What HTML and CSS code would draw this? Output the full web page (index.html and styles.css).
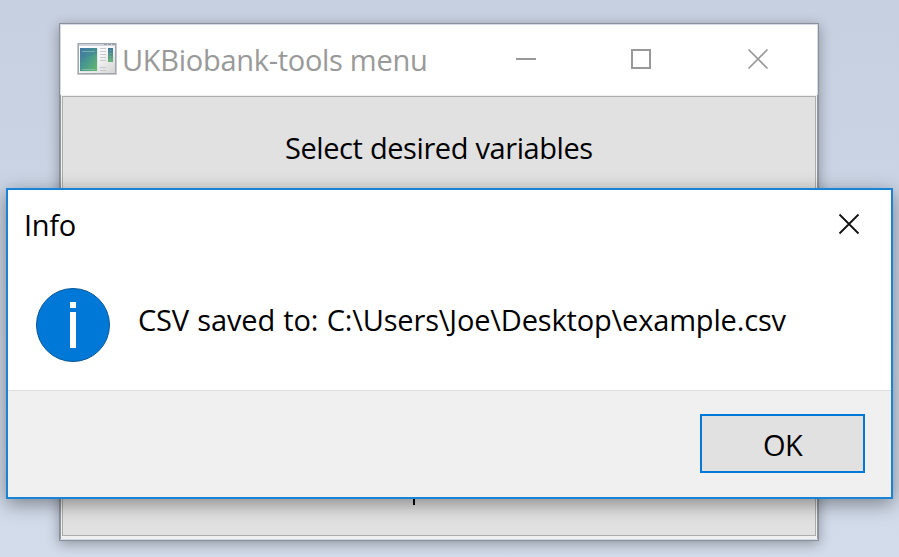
FILE: index.html
```html
<!DOCTYPE html>
<html lang="en">
<head>
<meta charset="utf-8">
<title>UKBiobank-tools menu</title>
<link rel="stylesheet" href="styles.css">
</head>
<body>
<main class="desktop">
  <section class="window">
    <header class="window-title">
      <svg class="app-icon" width="40" height="34" viewBox="0 0 40 34">
        <defs>
          <linearGradient id="pane" x1="0" y1="0" x2="1" y2="1">
            <stop offset="0" stop-color="#4478a8"/><stop offset=".45" stop-color="#469690"/><stop offset="1" stop-color="#66b86c"/>
          </linearGradient>
          <linearGradient id="sheet" x1="0" y1="0" x2="1" y2="1">
            <stop offset="0" stop-color="#fff"/><stop offset=".5" stop-color="#f7f7f7"/><stop offset="1" stop-color="#d4d4d6"/>
          </linearGradient>
          <linearGradient id="strip" x1="0" y1="0" x2="0" y2="1">
            <stop offset="0" stop-color="#41769a"/><stop offset="1" stop-color="#68b476"/>
          </linearGradient>
        </defs>
        <rect x="0" y="1" width="40" height="32" fill="#cacaca"/>
        <rect x="1" y="1" width="38" height="31" fill="#a1a5ad"/>
        <rect x="2" y="2" width="36" height="29" fill="url(#sheet)"/>
        <rect x="2" y="2" width="36" height="2" fill="#cfd3dc"/>
        <path d="M27 2.5h11" stroke="#9a9fa8" stroke-dasharray="3 1"/>
        <rect x="3" y="6" width="18" height="24" fill="#e3e7e7"/>
        <rect x="3" y="6" width="17" height="23" fill="url(#pane)"/>
        <path d="M3 21q5-7 17-9v-6H3z" fill="#3f78a0" opacity=".3"/>
        <path d="M5 9.500h13M5 27.500h13" stroke="#9cc8bd" opacity=".6"/>
        <path d="M23 6.500h6M23 9.500h6M23 12.500h6M23 15.500h6M23 18.500h6M23 25.500h6M23 28.500h6" stroke="#c9cacb"/>
        <rect x="31" y="6" width="5" height="14" fill="url(#strip)"/>
        <path d="M33.500 8v12" stroke="#8fc0a8" stroke-dasharray="1 2" opacity=".7"/>
      </svg>
      <h1 class="window-name">UKBiobank-tools menu</h1>
      <svg class="window-controls" width="254" height="22" viewBox="0 0 254 22" fill="none" stroke="#999" stroke-width="2">
        <path d="M0 11h20M116 2h18v18h-18z"/>
        <path d="M232.500 1.500l19 19M251.500 1.500l-19 19" stroke-width="1.700"/>
      </svg>
    </header>
    <div class="window-body">
      <div class="menu-panel">
        <span class="menu-label">Select desired variables</span>
        <span class="descender"></span>
      </div>
    </div>
  </section>

  <section class="dialog" role="dialog">
    <header class="dialog-title">
      <h2 class="dialog-name">Info</h2>
      <svg width="22" height="22" viewBox="0 0 22 22" stroke="#111" stroke-width="1.800"><path d="M1.500 1.500l19 19M20.500 1.500l-19 19"/></svg>
    </header>
    <div class="dialog-content">
      <svg class="info-icon" width="74" height="74" viewBox="0 0 74 74">
        <circle cx="37" cy="37" r="36.500" fill="#0078d7" stroke="#0a5796"/>
        <path d="M34 14h6v6h-6zM34 24h6v36h-6z" fill="#fff"/>
      </svg>
      <p class="message">CSV saved to: C:\Users\Joe\Desktop\example.csv</p>
    </div>
    <footer class="dialog-footer">
      <button class="ok">OK</button>
    </footer>
  </section>
</main>
</body>
</html>
```
FILE: styles.css
```css
* { box-sizing: border-box; }
body {
  margin: 0;
  font-family: "Open Sans", "Noto Sans", sans-serif;
  font-size: 29px;
  color: #000;
}
h1, h2, p { margin: 0; font-size: inherit; font-weight: 400; white-space: nowrap; }
svg { display: block; flex: none; }

.desktop {
  position: relative;
  width: 899px;
  height: 557px;
  overflow: hidden;
  background: linear-gradient(#c7d0e0, #ccd6e6 55%, #d3dceb);
}

.window {
  position: absolute;
  left: 59px;
  top: 23px;
  width: 760px;
  height: 518px;
  display: flex;
  flex-direction: column;
  border: 1px solid #8a919d;
  background: #f0f0f0;
  box-shadow: 0 3px 12px rgba(0, 0, 0, .32);
}
.window-title {
  height: 71px;
  display: flex;
  align-items: center;
  padding: 0 0 2px 16px;
  border: 1px solid #d5dbe6;
  border-bottom: 0;
  background: #fff;
  color: #999;
}
.window-name { width: 307px; margin-left: 5px; line-height: 40px; padding-top: 2px; letter-spacing: -.29px; }
.window-controls { margin-left: 87px; }
.window-body {
  flex: 1;
  padding: 1px 1px 3px;
  border: solid #92979e;
  border-width: 0 1px;
  box-shadow: 0 1px #cfd8e4;
  margin-bottom: 1px;
}
.menu-panel {
  height: 100%;
  display: flex;
  flex-direction: column;
  justify-content: space-between;
  padding: 31px 0 30px;
  border: 1px solid #adadad;
  background: #e1e1e1;
}
.menu-label { margin-left: 222px; line-height: 40px; white-space: nowrap; letter-spacing: -.43px; word-spacing: .4px; }
.descender { width: 2px; height: 20px; margin-left: 350px; background: #000; }

.dialog {
  position: absolute;
  left: 6px;
  top: 188px;
  width: 887px;
  height: 311px;
  display: flex;
  flex-direction: column;
  border: 2px solid #1883d7;
  background: #fff;
  box-shadow: 0 5px 18px rgba(0, 0, 0, .4);
}
.dialog-title {
  height: 70px;
  display: flex;
  align-items: center;
  justify-content: space-between;
  padding: 0 31px 2px 16px;
}
.dialog-name { line-height: 40px; padding-top: 2px; letter-spacing: -.3px; }
.dialog-content {
  flex: 1;
  display: flex;
  padding: 28px 28px 0;
}
.message { margin-left: 28px; padding-top: 12px; line-height: 40px; letter-spacing: -.16px; word-spacing: 1px; }
.dialog-footer {
  height: 107px;
  display: flex;
  justify-content: flex-end;
  padding: 23px 26px 0 0;
  border-top: 1px solid #dfdfdf;
  background: #f0f0f0;
}
.ok {
  width: 165px;
  height: 59px;
  padding: 3px 0 0;
  border: 2px solid #0078d7;
  background: #e1e1e1;
  color: #000;
  font: inherit;
  line-height: 40px;
  letter-spacing: -.6px;
}
```
